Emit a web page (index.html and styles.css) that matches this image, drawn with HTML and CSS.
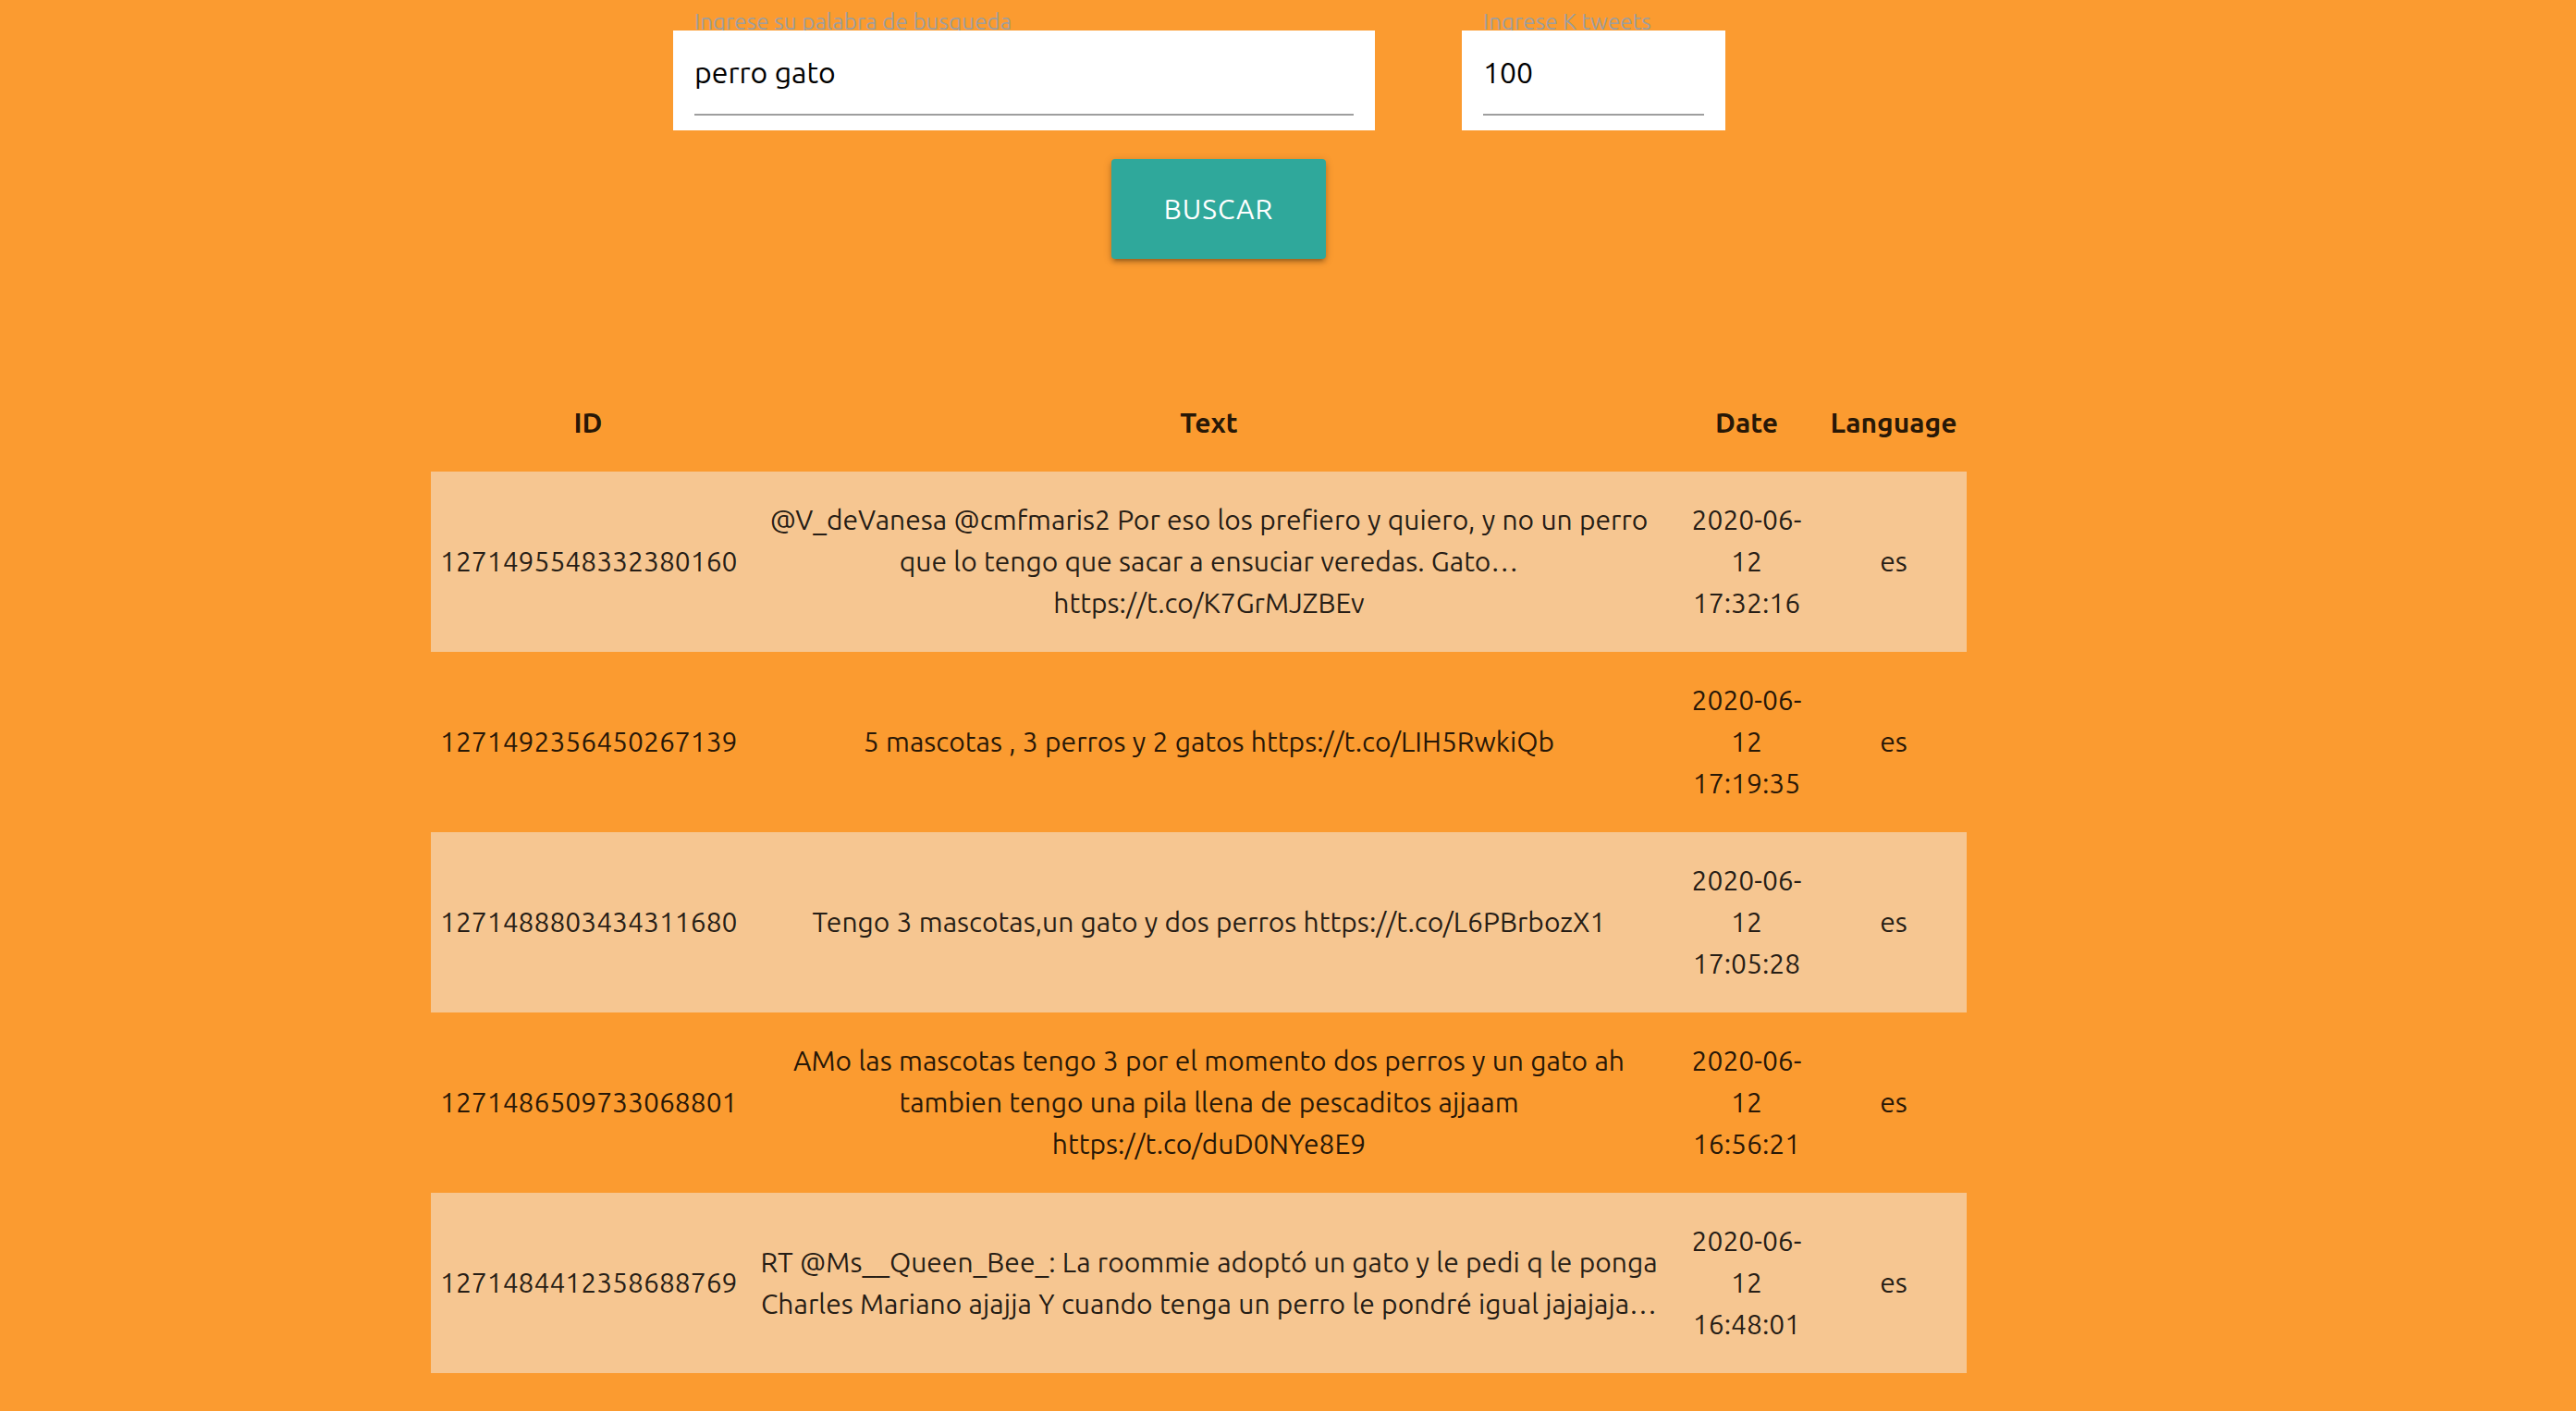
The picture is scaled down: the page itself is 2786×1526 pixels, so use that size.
FILE: index.html
```html
<!DOCTYPE html>
<html lang="es">
<head>
<meta charset="utf-8">
<title>Tweets</title>
<link rel="stylesheet" href="styles.css">
</head>
<body>
<div class="page">
  <form class="search">
    <div class="fields">
      <div class="field field-word">
        <label class="field-label">Ingrese su palabra de busqueda</label>
        <input class="field-input" type="text" value="perro gato">
      </div>
      <div class="field field-k">
        <label class="field-label">Ingrese K tweets</label>
        <input class="field-input" type="text" value="100">
      </div>
    </div>
    <div class="actions">
      <button class="btn" type="button">BUSCAR</button>
    </div>
  </form>

  <table class="tweets">
    <colgroup>
      <col class="c-id"><col class="c-text"><col class="c-date"><col class="c-lang">
    </colgroup>
    <thead>
      <tr><th>ID</th><th>Text</th><th>Date</th><th>Language</th></tr>
    </thead>
    <tbody>
      <tr>
        <td>1271495548332380160</td>
        <td>@V_deVanesa @cmfmaris2 Por eso los prefiero y quiero, y no un perro que lo tengo que sacar a ensuciar veredas. Gato… https://t.co/K7GrMJZBEv</td>
        <td>2020-06-12 17:32:16</td>
        <td>es</td>
      </tr>
      <tr>
        <td>1271492356450267139</td>
        <td>5 mascotas , 3 perros y 2 gatos https://t.co/LIH5RwkiQb</td>
        <td>2020-06-12 17:19:35</td>
        <td>es</td>
      </tr>
      <tr>
        <td>1271488803434311680</td>
        <td>Tengo 3 mascotas,un gato y dos perros https://t.co/L6PBrbozX1</td>
        <td>2020-06-12 17:05:28</td>
        <td>es</td>
      </tr>
      <tr>
        <td>1271486509733068801</td>
        <td>AMo las mascotas tengo 3 por el momento dos perros y un gato ah tambien tengo una pila llena de pescaditos ajjaam https://t.co/duD0NYe8E9</td>
        <td>2020-06-12 16:56:21</td>
        <td>es</td>
      </tr>
      <tr>
        <td>1271484412358688769</td>
        <td>RT @Ms__Queen_Bee_: La roommie adoptó un gato y le pedi q le ponga Charles Mariano ajajja Y cuando tenga un perro le pondré igual jajajaja…</td>
        <td>2020-06-12 16:48:01</td>
        <td>es</td>
      </tr>
    </tbody>
  </table>
</div>
</body>
</html>
```
FILE: styles.css
```css
html, body {
  margin: 0;
  padding: 0;
}

body {
  background: #fb9b30;
  font-family: "Ubuntu", Lato, "Noto Sans", sans-serif;
  color: rgba(0, 0, 0, 0.87);
  font-size: 30px;
  line-height: 45px;
}

.page {
  width: 1661px;
  margin-left: 466px;
  padding-top: 33px;
}

.search {
  margin: 0;
}

.fields {
  display: flex;
  gap: 94px;
  padding-left: 262px;
}

.field {
  position: relative;
  background: #fff;
  padding: 0 23px 16px;
  box-sizing: border-box;
}

.field-word { width: 759px; }
.field-k { width: 285px; }

.field-label {
  position: absolute;
  left: 23px;
  top: -22px;
  z-index: -1;
  font-size: 24.3px;
  line-height: 24px;
  color: #9e9e9e;
  white-space: nowrap;
}

.field-input {
  display: block;
  width: 100%;
  height: 92px;
  box-sizing: border-box;
  margin: 0;
  padding: 0;
  border: none;
  border-bottom: 2px solid #9e9e9e;
  background: transparent;
  outline: none;
  font-family: inherit;
  font-size: 32px;
  color: #000;
}

.actions {
  padding-left: 736px;
  padding-top: 31px;
}

.btn {
  display: block;
  width: 232px;
  height: 108px;
  margin: 0;
  padding: 0;
  border: none;
  border-radius: 4px;
  background: #2fa89b;
  color: #fff;
  font-family: inherit;
  font-size: 30px;
  letter-spacing: 1px;
  line-height: 108px;
  text-align: center;
  box-shadow: 0 4px 4px 0 rgba(0, 0, 0, 0.14), 0 6px 2px -4px rgba(0, 0, 0, 0.12), 0 2px 10px 0 rgba(0, 0, 0, 0.2);
}

.tweets {
  margin-top: 125px;
  width: 1661px;
  table-layout: fixed;
  border-collapse: collapse;
  border-spacing: 0;
}

.c-id { width: 340px; }
.c-text { width: 1003px; }
.c-date { width: 160px; }
.c-lang { width: 158px; }

.tweets th,
.tweets td {
  padding: 30px 10px;
  text-align: center;
  vertical-align: middle;
  line-height: 45px;
}

.tweets th {
  font-weight: 700;
}

.tweets td {
  word-spacing: 0.4px;
}

.tweets tbody tr:nth-child(odd) {
  background: rgba(242, 242, 242, 0.5);
}
```
